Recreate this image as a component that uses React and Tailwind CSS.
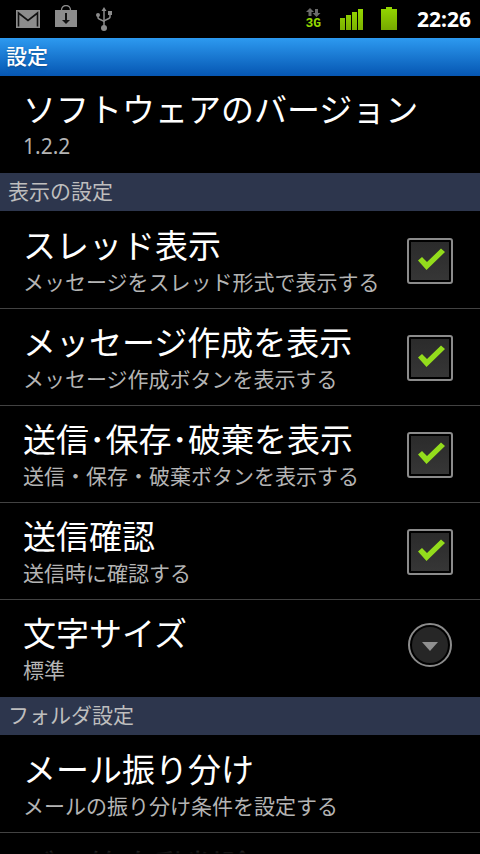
import { useState } from 'react';

function MailIcon() {
    return (
        <svg className="w-6 h-[18px]" viewBox="0 0 24 18" aria-hidden="true">
            <rect width="24" height="18" fill="#8c8c8c" />
            <path d="M2.500 16.500V3L12 10.500L21.500 3V16.500" fill="none" stroke="#111" strokeWidth="1.600" />
        </svg>
    );
}

function MarketIcon() {
    return (
        <svg className="w-[22px] h-[22px]" viewBox="0 0 22 22" aria-hidden="true">
            <path d="M6.500 6V5a4.500 4.500 0 0 1 9 0v1" fill="none" stroke="#8c8c8c" strokeWidth="1.300" />
            <rect y="5" width="22" height="17" fill="#8c8c8c" />
            <path d="M10 8h2v7h3l-4 4-4-4h3z" fill="#111" />
        </svg>
    );
}

function UsbIcon() {
    return (
        <svg className="w-4 h-6" viewBox="0 0 16 24" aria-hidden="true">
            <g fill="none" stroke="#8c8c8c" strokeWidth="1.500">
                <path d="M8 3v18" />
                <path d="M2 8v2.500c0 2.500 6 2.500 6 4.500" />
                <path d="M14 6v4c0 2.500-6 2.500-6 4.500" />
            </g>
            <path d="M8 0l2.500 4h-5z" fill="#8c8c8c" />
            <rect x="12" y="4" width="4" height="4" fill="#8c8c8c" />
            <circle cx="2" cy="8" r="2" fill="#8c8c8c" />
            <circle cx="8" cy="21" r="3" fill="#8c8c8c" />
        </svg>
    );
}

function DataIndicator() {
    return (
        <div className="flex flex-col items-center gap-px">
            <svg className="w-[15px] h-[9px]" viewBox="0 0 15 9" fill="#6a6a6a" aria-hidden="true">
                <path d="M4 0l4 4H5.500v4h-3V4H0z" />
                <path d="M10.500 9l-4-4H9V1h3v4h2.500z" />
            </svg>
            <span className="font-['Liberation_Mono',monospace] font-bold text-[13px] leading-3 text-[#93d800]">3G</span>
        </div>
    );
}

function SignalIcon() {
    return (
        <svg className="w-[23px] h-[21px]" viewBox="0 0 23 21" aria-hidden="true">
            <defs>
                <linearGradient id="signal" gradientUnits="userSpaceOnUse" x1="0" y1="0" x2="0" y2="21">
                    <stop offset="0" stopColor="#94d800" />
                    <stop offset="1" stopColor="#7cb000" />
                </linearGradient>
            </defs>
            <g fill="url(#signal)">
                <rect x="0" y="9" width="5" height="12" />
                <rect x="6" y="6" width="5" height="15" />
                <rect x="12" y="3" width="5" height="18" />
                <rect x="18" y="0" width="5" height="21" />
            </g>
        </svg>
    );
}

function BatteryIcon() {
    return (
        <svg className="w-4 h-[23px]" viewBox="0 0 16 23" aria-hidden="true">
            <defs>
                <linearGradient id="battery" x1="0" y1="0" x2="0" y2="1">
                    <stop offset="0" stopColor="#94d800" />
                    <stop offset="1" stopColor="#76a800" />
                </linearGradient>
            </defs>
            <path d="M5 0h6v2h5v21H0V2h5z" fill="url(#battery)" />
        </svg>
    );
}

function StatusBar() {
    return (
        <div className="h-[38px] shrink-0 flex items-center justify-between pl-4 pr-[9px] bg-black">
            <div className="flex items-center gap-[15px]">
                <MailIcon />
                <div className="pb-1.5"><MarketIcon /></div>
                <div className="pl-1"><UsbIcon /></div>
            </div>
            <div className="flex items-center">
                <div className="mr-[19px]"><DataIndicator /></div>
                <div className="mr-[18px] pt-px"><SignalIcon /></div>
                <div className="mr-5 pb-px"><BatteryIcon /></div>
                <time className="font-['Noto_Sans',sans-serif] font-bold text-[21px] leading-6 text-white">22:26</time>
            </div>
        </div>
    );
}

function SectionHeader({ children }) {
    return (
        <h2 className="mb-px px-2 pt-1 pb-1.5 bg-[#2d364d] text-[21px] leading-7 text-[#bebebe]">
            {children}
        </h2>
    );
}

function RowText({ title, summary }) {
    return (
        <span className="flex-1 min-w-0 flex flex-col text-left whitespace-nowrap">
            <span className="text-[33px] leading-[44px] text-white">{title}</span>
            <span className="min-h-7 text-[21px] leading-7 text-[#b4b4b4]">{summary}</span>
        </span>
    );
}

const ROW = 'w-full flex items-center py-3 pl-[23px] pr-[27px] border-b border-[#424242] last:border-transparent';

function CheckRow({ title, summary }) {
    const [checked, setChecked] = useState(true);

    return (
        <label className={ROW}>
            <RowText title={title} summary={summary} />
            <input
                type="checkbox"
                className="peer sr-only"
                checked={checked}
                onChange={(e) => setChecked(e.target.checked)}
            />
            <span className="mt-0.5 w-[46px] h-[46px] shrink-0 flex items-center justify-center rounded-[3px] border-2 border-[#8b8b8b] bg-black peer-checked:[&_path]:opacity-100">
                <svg className="w-[38px] h-[38px] bg-linear-to-b from-[#2b2b2b] to-[#363636]" viewBox="0 0 38 38" aria-hidden="true">
                    <path
                        d="M7 18.500l4-3.500 5 5L30 6.500 34 10 15.500 28z"
                        fill="#93dc1c"
                        className="opacity-0"
                    />
                </svg>
            </span>
        </label>
    );
}

function MenuRow({ title, summary, picker }) {
    return (
        <button type="button" className={ROW}>
            <RowText title={title} summary={summary} />
            {picker && (
                <svg className="mr-px mb-1.5 w-11 h-11 shrink-0" viewBox="0 0 44 44" aria-hidden="true">
                    <circle cx="22" cy="22" r="21" fill="#000" stroke="#8b8b8b" strokeWidth="2" />
                    <circle cx="22" cy="22" r="18" fill="#262626" />
                    <path d="M14 19h16l-8 9z" fill="#8f8f8f" />
                </svg>
            )}
        </button>
    );
}

export default function App() {
    return (
        <div className="relative h-screen flex flex-col overflow-hidden bg-black font-['Noto_Sans','Noto_Sans_CJK_JP',sans-serif]" lang="ja">
            <StatusBar />
            <h1 className="shrink-0 px-1.5 pt-1 pb-1.5 bg-linear-to-b from-[#2d9af0] to-[#0656b2] text-[21px] leading-7 font-medium text-white text-shadow-md">
                設定
            </h1>
            <main className="flex-1 min-h-0 overflow-hidden">
                <section>
                    <MenuRow title="ソフトウェアのバージョン" summary="1.2.2" />
                </section>
                <section>
                    <SectionHeader>表示の設定</SectionHeader>
                    <CheckRow title="スレッド表示" summary="メッセージをスレッド形式で表示する" />
                    <CheckRow title="メッセージ作成を表示" summary="メッセージ作成ボタンを表示する" />
                    <CheckRow title="送信･保存･破棄を表示" summary="送信・保存・破棄ボタンを表示する" />
                    <CheckRow title="送信確認" summary="送信時に確認する" />
                    <MenuRow title="文字サイズ" summary="標準" picker />
                </section>
                <section>
                    <SectionHeader>フォルダ設定</SectionHeader>
                    <MenuRow title="メール振り分け" summary="メールの振り分け条件を設定する" />
                    <MenuRow title="ゴミ箱自動削除" summary="" />
                </section>
            </main>
            <div className="absolute inset-x-0 bottom-0 h-5 bg-linear-to-b from-transparent to-black pointer-events-none" />
        </div>
    );
}
